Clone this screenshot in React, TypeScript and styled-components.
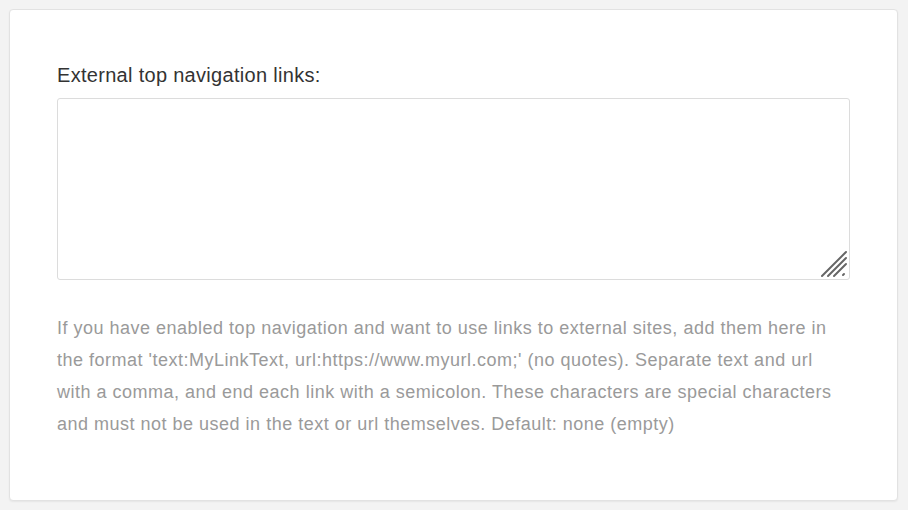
import React from "react";
import styled, { createGlobalStyle } from "styled-components";

const GlobalStyle = createGlobalStyle`
  html, body {
    margin: 0;
    padding: 0;
    background: #f3f3f3;
  }
  body {
    font-family: "Liberation Sans", Arial, Helvetica, sans-serif;
  }
`;

const Page = styled.div`
  padding: 9px 10px 9px 9px;
  height: 510px;
  box-sizing: border-box;
`;

const Card = styled.section`
  background: #fff;
  border: 1px solid #e2e2e2;
  border-radius: 4px;
  box-shadow: 0 1px 2px rgba(0, 0, 0, 0.06);
  height: 492px;
  box-sizing: border-box;
  padding: 52px 47px 0 47px;
`;

const Label = styled.label`
  display: block;
  font-size: 20px;
  line-height: 26px;
  letter-spacing: 0.3px;
  color: #333;
  margin-bottom: 10px;
`;

const TextareaWrap = styled.div`
  position: relative;
  height: 182px;
`;

const TextArea = styled.textarea`
  display: block;
  width: 100%;
  height: 100%;
  box-sizing: border-box;
  border: 1px solid #dcdcdc;
  border-radius: 3px;
  resize: none;
  outline: none;
  padding: 8px 10px;
  font-family: inherit;
  font-size: 16px;
  color: #333;
  background: #fff;
`;

const Grip = styled.svg`
  position: absolute;
  right: 2px;
  bottom: 2px;
  width: 28px;
  height: 28px;
  pointer-events: none;
`;

const Help = styled.p`
  margin: 32px 0 0;
  font-size: 18px;
  line-height: 32px;
  letter-spacing: 0.5px;
  color: #9a9a9a;
`;

export default function App() {
  return (
    <>
      <GlobalStyle />
      <Page>
        <Card>
          <Label htmlFor="ext-links">External top navigation links:</Label>
          <TextareaWrap>
            <TextArea id="ext-links" />
            <Grip viewBox="0 0 28 28">
              <g stroke="#666" strokeWidth="2" strokeLinecap="round">
                <line x1="2" y1="26" x2="26" y2="2" />
                <line x1="8" y1="26" x2="26" y2="8" />
                <line x1="14" y1="26" x2="26" y2="14" />
                <line x1="23" y1="25" x2="24" y2="24" />
              </g>
            </Grip>
          </TextareaWrap>
          <Help>
            If you have enabled top navigation and want to use links to external sites, add them here in
            the format 'text:MyLinkText, url:https://www.myurl.com;' (no quotes). Separate text and url
            with a comma, and end each link with a semicolon. These characters are special characters
            and must not be used in the text or url themselves. Default: none (empty)
          </Help>
        </Card>
      </Page>
    </>
  );
}
